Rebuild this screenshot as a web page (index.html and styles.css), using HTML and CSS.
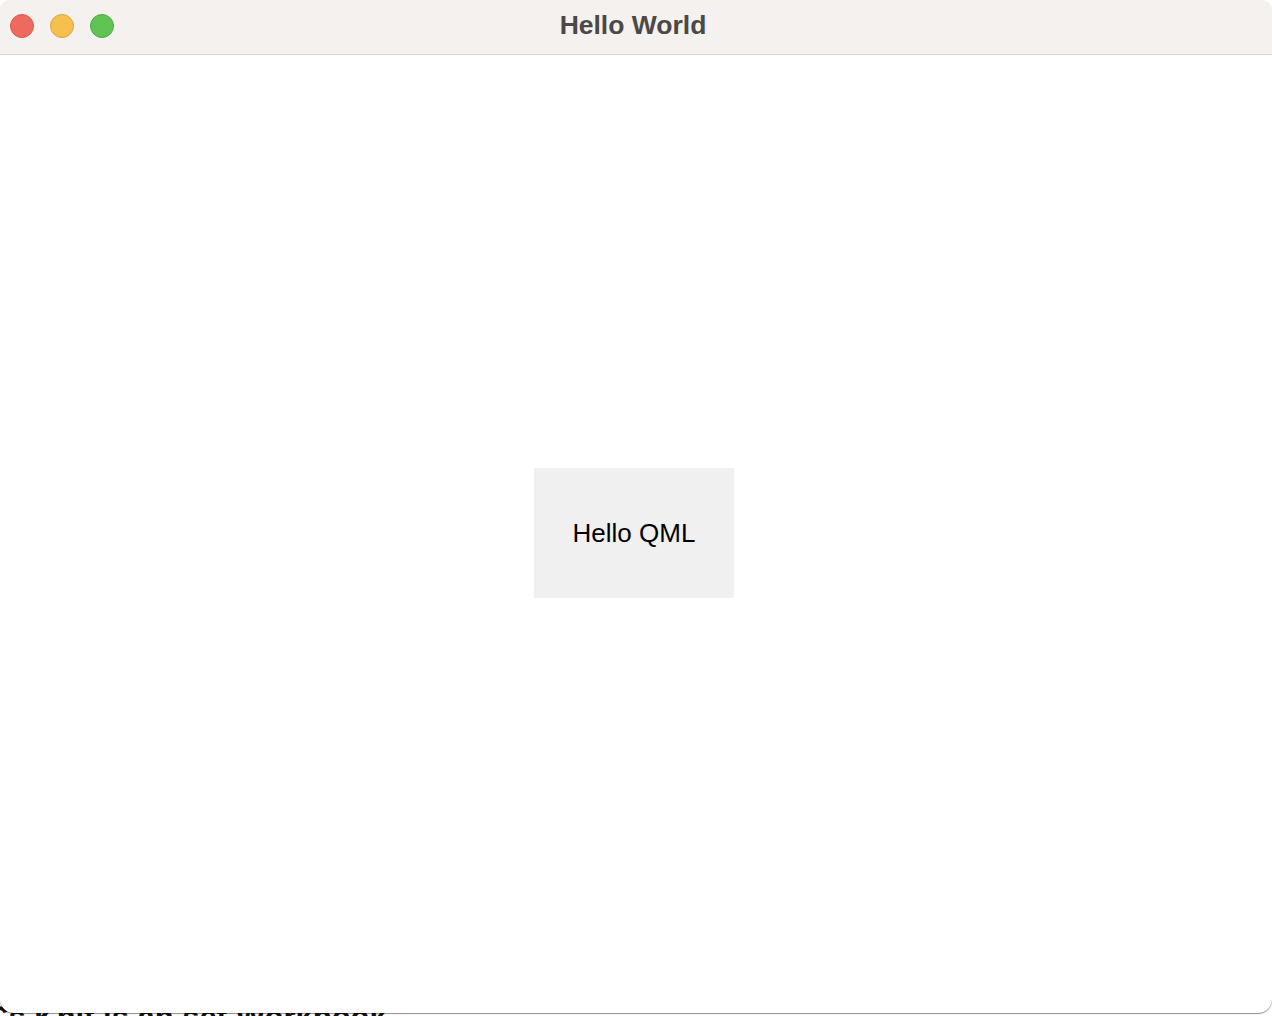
FILE: index.html
```html
<!DOCTYPE html>
<html>
<head>
<meta charset="utf-8">
<link rel="stylesheet" href="styles.css">
</head>
<body>
<div class="backdrop">
  <p class="behind-text">Cs Knit is an set Workbook</p>
</div>
<div class="window">
  <div class="titlebar">
    <div class="lights">
      <span class="light red"></span>
      <span class="light yellow"></span>
      <span class="light green"></span>
    </div>
    <div class="title">Hello World</div>
  </div>
  <div class="content">
    <div class="box">Hello QML</div>
  </div>
</div>
</body>
</html>
```
FILE: styles.css
```css
html, body {
  margin: 0;
  padding: 0;
  width: 1272px;
  height: 1016px;
  overflow: hidden;
  background: #ffffff;
  font-family: "Liberation Sans", Arial, sans-serif;
}
.backdrop {
  position: absolute;
  left: 0;
  top: 0;
  width: 1272px;
  height: 1016px;
  z-index: 0;
}
.behind-text {
  position: absolute;
  left: -14px;
  top: 1002px;
  margin: 0;
  line-height: 1;
  font-size: 31px;
  font-weight: bold;
  color: #111;
  white-space: nowrap;
}
.window {
  position: relative;
  z-index: 1;
  width: 1272px;
  height: 1013px;
  background: #ffffff;
  border-radius: 10px 10px 14px 14px;
  box-shadow: 0 1px 1px rgba(0,0,0,0.45);
  overflow: hidden;
  display: flex;
  flex-direction: column;
}
.titlebar {
  height: 54px;
  flex: none;
  background: #f5f1ee;
  border-bottom: 1px solid #d9d7d5;
  display: flex;
  align-items: center;
  justify-content: center;
  position: relative;
}
.lights {
  position: absolute;
  left: 10px;
  top: 14px;
  display: flex;
  gap: 16px;
}
.light {
  width: 22px;
  height: 22px;
  border-radius: 50%;
  display: block;
}
.red { background: #ee6a5f; border: 1px solid #d9574d; }
.yellow { background: #f6c04f; border: 1px solid #dea540; }
.green { background: #5fc454; border: 1px solid #4fa944; }
.title {
  font-size: 26.5px;
  font-weight: bold;
  color: #4b4846;
  margin-left: -6px;
  margin-top: -4px;
}
.content {
  flex: 1;
  display: flex;
  align-items: center;
  justify-content: center;
  padding-right: 4px;
  padding-bottom: 2px;
}
.box {
  width: 200px;
  height: 130px;
  background: #f0f0f0;
  display: flex;
  align-items: center;
  justify-content: center;
  font-size: 26px;
  color: #000;
}
```
